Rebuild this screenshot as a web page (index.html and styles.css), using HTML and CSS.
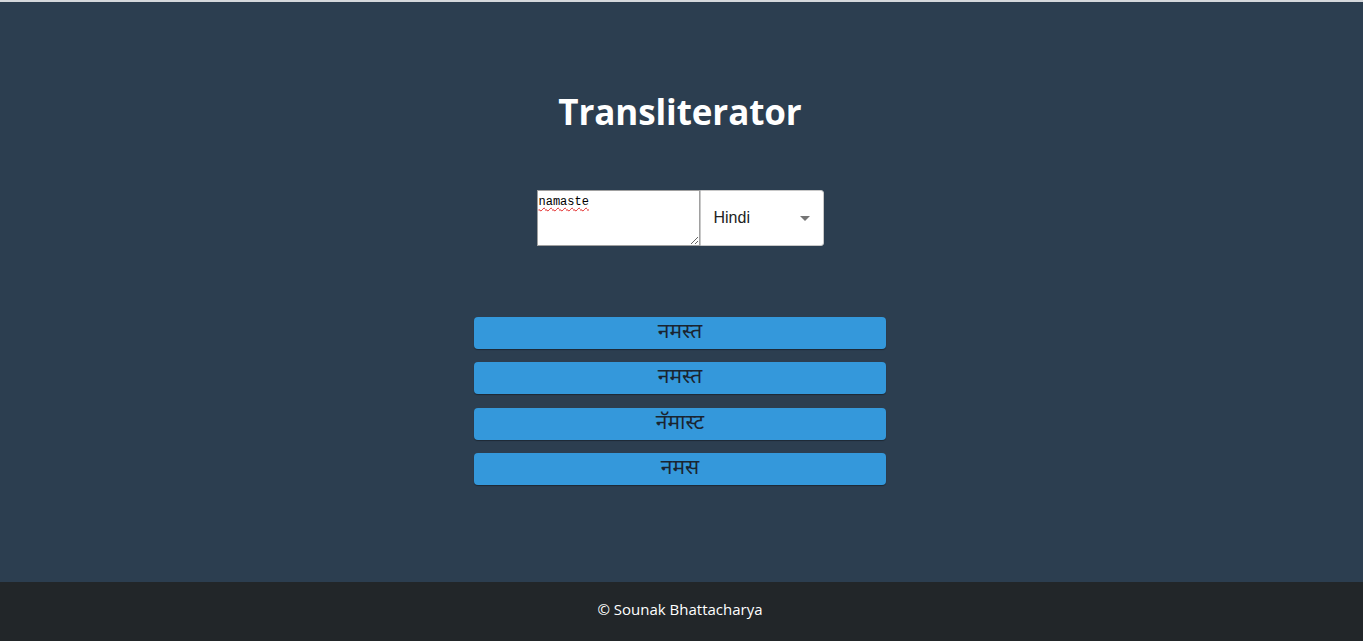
FILE: index.html
```html
<!DOCTYPE html>
<html lang="en">
<head>
<meta charset="utf-8">
<title>Transliterator</title>
<link rel="stylesheet" href="styles.css">
</head>
<body>
<main class="main">
  <h1 class="title">Transliterator</h1>
  <form class="form">
    <textarea class="input" spellcheck="true">namaste</textarea>
    <div class="select">
      <span class="select-label">Hindi</span>
      <span class="select-arrow"></span>
    </div>
  </form>
  <ul class="results">
    <li><button class="result" type="button">नमस्त</button></li>
    <li><button class="result" type="button">नमस्त</button></li>
    <li><button class="result" type="button">नॅमास्ट</button></li>
    <li><button class="result" type="button">नमस</button></li>
  </ul>
</main>
<footer class="footer">© Sounak Bhattacharya</footer>
</body>
</html>
```
FILE: styles.css
```css
html, body {
  margin: 0;
  padding: 0;
}
body {
  background: #2c3e50;
  font-family: "Open Sans", "Noto Sans", sans-serif;
  border-top: 2px solid #d5d8dc;
  box-sizing: border-box;
}
.main {
  height: 580px;
  box-sizing: border-box;
  display: flex;
  flex-direction: column;
  align-items: center;
  padding-top: 89px;
  padding-right: 3px;
}
.title {
  margin: 0;
  color: #ffffff;
  font-size: 35px;
  line-height: 42px;
  font-weight: 700;
  letter-spacing: -0.1px;
}
.form {
  margin: 57px 0 0;
  display: flex;
}
.input {
  box-sizing: border-box;
  width: 163px;
  height: 56px;
  margin: 0;
  border: 1px solid #a0a0a0;
  padding: 4px 1px;
  font-family: "Liberation Mono", "DejaVu Sans Mono", monospace;
  font-size: 12px;
  line-height: 14px;
  color: #000;
  background: #fff;
  resize: both;
  text-decoration: underline wavy #e02020;
  text-decoration-thickness: 1px;
  text-underline-offset: 2px;
}
.select {
  box-sizing: border-box;
  width: 124px;
  height: 56px;
  background: #fff;
  border: 1px solid #c8c8c8;
  border-radius: 0 3px 3px 0;
  display: flex;
  align-items: center;
  justify-content: space-between;
  padding: 0 13px 0 13px;
}
.select-label {
  font-family: "Liberation Sans", Arial, sans-serif;
  font-size: 16px;
  color: #222;
}
.select-arrow {
  width: 0;
  height: 0;
  border-left: 5px solid transparent;
  border-right: 5px solid transparent;
  border-top: 5px solid #757575;
}
.results {
  list-style: none;
  margin: 71px 0 0;
  padding: 0;
  width: 412px;
  display: flex;
  flex-direction: column;
  gap: 13.4px;
}
.result {
  display: block;
  width: 100%;
  height: 32px;
  margin: 0;
  padding: 0;
  border: none;
  border-radius: 4px;
  background: #3498db;
  box-shadow: 0 1px 1px rgba(0, 0, 0, 0.35);
  color: #1a2430;
  font-family: "Noto Sans Devanagari", "Noto Sans", serif;
  font-size: 21px;
  line-height: 32px;
  text-align: center;
}
.footer {
  height: 59px;
  box-sizing: border-box;
  padding-bottom: 6px;
  padding-right: 3px;
  background: #222629;
  color: #ffffff;
  display: flex;
  align-items: center;
  justify-content: center;
  font-size: 15px;
}
```
